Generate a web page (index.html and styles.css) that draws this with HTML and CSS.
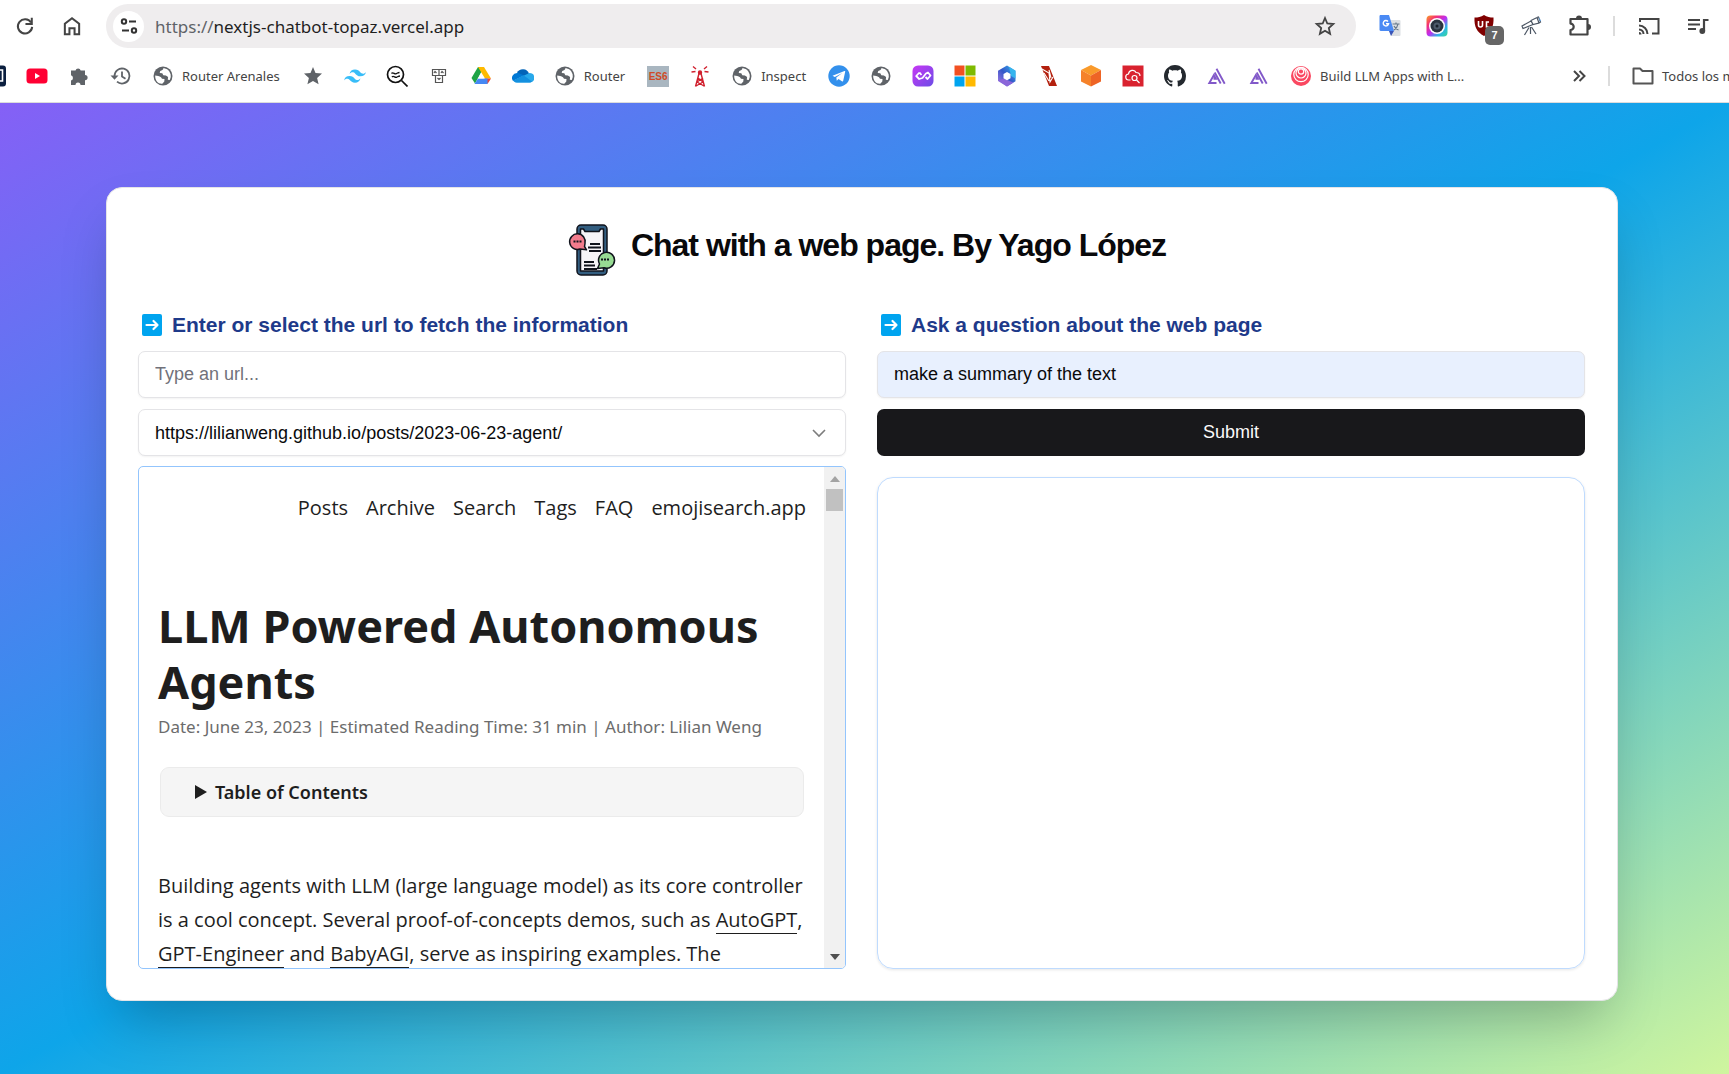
FILE: index.html
```html
<!DOCTYPE html>
<html lang="en">
<head>
<meta charset="utf-8">
<title>Chat with a web page</title>
<link rel="stylesheet" href="styles.css">
</head>
<body>
<svg class="defs" aria-hidden="true">
  <defs>
    <linearGradient id="purple" x1="0" y1="0" x2="1" y2="1"><stop offset="0" stop-color="#c837f5"/><stop offset="1" stop-color="#6b4de6"/></linearGradient>
    <linearGradient id="rainbow" x1="0" y1="0" x2="1" y2="1"><stop offset="0" stop-color="#f9a423"/><stop offset=".25" stop-color="#f5316f"/><stop offset=".5" stop-color="#c02df0"/><stop offset=".75" stop-color="#2bb7e8"/><stop offset="1" stop-color="#38d996"/></linearGradient>
    <linearGradient id="office" x1="0" y1="1" x2="1" y2="0"><stop offset="0" stop-color="#b07be8"/><stop offset=".5" stop-color="#3457c8"/><stop offset="1" stop-color="#35b8f0"/></linearGradient>
    <symbol id="globe" viewBox="-1 -1 22 22">
      <circle cx="10" cy="10" r="9.500" fill="#5f6368"/>
      <path fill="#fff" d="M2.200 9.500c2 .2 4.200.5 5.800 1.800l1 1.400 2.500.3-.2 2.400-2 2.300C5.400 18.200 1.900 14.600 2.200 9.500z"/>
      <path fill="#fff" d="M10.500 2.100c-.3 1.900-1.500 2.500-3.300 2.900L6.700 7l2.600.3 1 2 2.600.3 2.200 1.500-.3 2.700 2 .2A8 8 0 0 0 14.200 3.300z"/>
    </symbol>
    <symbol id="amplify" viewBox="0 0 22 22">
      <path fill="none" stroke="#8259c9" stroke-width="1.900" d="M10.500 18H3.300L7.800 10.200L9.800 13.800H7.500M8.700 7.500l6 11M10.500 3.800l8.200 15"/>
    </symbol>
  </defs>
</svg>

<header class="browser">
  <div class="toolbar">
    <button class="tool" aria-label="Reload"><svg viewBox="0 0 24 24" width="22" height="22"><path fill="none" stroke="#444" stroke-width="2.200" d="M18.600 8.200A7.800 7.800 0 1 0 19.800 13"/><path fill="#444" d="M20.500 3v8h-8v-2.200h5.800V3z"/></svg></button>
    <button class="tool" aria-label="Home"><svg viewBox="0 0 24 24" width="22" height="22"><path fill="none" stroke="#444" stroke-width="2.200" d="M4.200 21V9.600L12 3.500l7.800 6.100V21h-5v-6.500H9.200V21z"/></svg></button>
    <div class="omnibox">
      <button class="site-info" aria-label="Site information"><svg viewBox="0 0 20 20" width="20" height="20" fill="none" stroke="#333" stroke-width="2"><circle cx="5" cy="5.500" r="2.200"/><path d="M10 5.500h7M3 14.500h7"/><circle cx="15" cy="14.500" r="2.200"/></svg></button>
      <span class="address"><span class="scheme">https://</span>nextjs-chatbot-topaz.vercel.app</span>
      <button class="tool" aria-label="Bookmark this page"><svg viewBox="0 0 24 24" width="24" height="24"><path fill="none" stroke="#444" stroke-width="1.800" d="M12 4l2.300 5.500 6 .5-4.500 4 1.300 5.800L12 16.700l-5.100 3.100L8.200 14l-4.500-4 6-.5z"/></svg></button>
    </div>
    <div class="extensions">
      <button class="tool" aria-label="Translate"><svg viewBox="0 0 22 22" width="22" height="22"><path fill="#dcdfe3" d="M9 5h11.500q1 0 1 1v14q0 1-1 1H12z"/><path fill="#4a8af4" d="M1 0h9l5 16H2q-1.500 0-1.500-1.500V1z"/><path fill="#3a55b8" d="M10 16h5l-3 5z"/><path fill="none" stroke="#fff" stroke-width="1.400" d="M9 6.500A2.700 2.700 0 1 0 9.600 8.700H7"/><path fill="none" stroke="#66788a" stroke-width="1.200" d="M13.500 9h7M17 7.500V9M19 9c-.5 3-2.500 5-4 6M15 11c1 2 3 3.500 4.500 4"/></svg></button>
      <button class="tool" aria-label="Screen capture"><svg viewBox="0 0 22 22" width="22" height="22"><rect x=".5" y=".5" width="21" height="21" rx="4" fill="url(#rainbow)"/><circle cx="11" cy="11" r="8" fill="#fff"/><circle cx="11" cy="11" r="6.500" fill="#2a3440"/><circle cx="11" cy="11" r="3.500" fill="#4d5b6b"/><circle cx="11" cy="11" r="1.500" fill="#18202a"/></svg></button>
      <button class="tool blocker" aria-label="Content blocker"><svg viewBox="0 0 22 22" width="22" height="22"><path fill="#800000" d="M11 0c3 2 6 2.500 9.500 2.500C21 12 18 17 11 21 4 17 1 12 1.500 2.500 5 2.500 8 2 11 0z"/><path fill="none" stroke="#fff" stroke-width="1.600" d="M5.500 6v4q0 2 2 2t2-2V6M16 7h-2.500v5H16"/></svg><span class="badge">7</span></button>
      <button class="tool" aria-label="Telescope"><svg viewBox="0 0 22 22" width="22" height="22" fill="none" stroke="#4b5563" stroke-width="1.200"><path d="M2 11l9-5 2 3.500-10 4zM11 5.500l6-3 2 5.500-6 1.500zM17 2.500l1.500-.5 2 5-1.500 1M9 12.500L4.500 20M10.500 12v7M11.500 12l4.500 7"/><path fill="#60a5e8" stroke="none" d="M18.500 2l1.500 4.500 1-1z"/></svg></button>
      <button class="tool" aria-label="Extensions"><svg viewBox="0 0 24 24" width="24" height="24"><path fill="none" stroke="#444" stroke-width="2.200" stroke-linejoin="round" d="M3.500 5h17v15.500h-17v-4.500a3.200 3.200 0 0 0 0-6.400z"/><path fill="#444" d="M9 4.500a3 3 0 0 1 6 0zM21 10a3 3 0 0 1 0 6z"/></svg></button>
      <span class="divider"></span>
      <button class="tool" aria-label="Cast"><svg viewBox="0 0 24 24" width="24" height="24"><path fill="none" stroke="#444" stroke-width="2" d="M3 8V5h18.500v14.500H15M2 11.500a8.500 8.500 0 0 1 8.500 8.500M2 15.500A4.500 4.500 0 0 1 6.500 20"/><path fill="#444" d="M2 18v2.500h2.500A2.500 2.500 0 0 0 2 18z"/></svg></button>
      <button class="tool" aria-label="Media"><svg viewBox="0 0 24 24" width="24" height="24"><path stroke="#444" stroke-width="2.200" d="M2 6h12M2 10.500h12M2 15h8M18 17V6h4.500" fill="none"/><circle cx="16.300" cy="17" r="2.900" fill="#444"/></svg></button>
    </div>
  </div>
  <nav class="bookmarks" aria-label="Bookmarks">
    <a href="#" class="mark first" aria-label="Notes"><svg viewBox="0 0 22 22" width="22" height="22"><rect y=".5" width="22" height="21" rx="3" fill="#0b1f3f"/><path fill="none" stroke="#fff" stroke-width="1.600" d="M10 5h8.500v11H10"/></svg></a>
    <a href="#" class="mark" aria-label="YouTube"><svg viewBox="0 0 22 22" width="22" height="22"><rect x=".5" y="3.500" width="21" height="15" rx="3.500" fill="#ff0033"/><path fill="#fff" d="M9 8l5 3-5 3z"/></svg></a>
    <a href="#" class="mark" aria-label="Extensions"><svg viewBox="0 0 22 22" width="22" height="22"><path fill="#5f6368" d="M3 5.500h4.500a2.700 2.700 0 0 1 5.200 0h4.300v4.500a2.600 2.600 0 0 1 0 5.200v4.800h-4.500a2.500 2.500 0 0 0-5 0H3v-4.500a2.700 2.700 0 0 0 0-5.200z"/></svg></a>
    <a href="#" class="mark" aria-label="History"><svg viewBox="0 0 22 22" width="22" height="22"><path fill="none" stroke="#5f6368" stroke-width="1.800" d="M4.500 11a7.500 7.500 0 1 1 2.500 5.600M12 6.500v5l3.500 2.200"/><path fill="#5f6368" d="M.5 10.500h8l-4 4.200z"/></svg></a>
    <a href="#" class="mark labelled"><svg width="22" height="22"><use href="#globe"/></svg>Router Arenales</a>
    <a href="#" class="mark" aria-label="Favorites"><svg viewBox="0 0 22 22" width="22" height="22"><path fill="#5f6368" d="M11 2l2.500 6 6.500.6-4.900 4.300L16.600 19.200 11 15.900l-5.600 3.300 1.500-6.300L2 8.600l6.500-.6z"/></svg></a>
    <a href="#" class="mark" aria-label="Tailwind CSS"><svg viewBox="0 0 24 24" width="22" height="22"><path fill="#38bdf8" d="M12 5c-3.200 0-5.200 1.600-6 4.800 1.200-1.600 2.600-2.200 4.200-1.800.9.200 1.600.9 2.300 1.700C13.700 10.900 15 12.300 18 12.300c3.200 0 5.200-1.600 6-4.800-1.200 1.600-2.600 2.200-4.200 1.800-.9-.2-1.600-.9-2.300-1.700C16.300 6.400 15 5 12 5zM6 12c-3.200 0-5.200 1.600-6 4.800 1.200-1.600 2.600-2.200 4.200-1.800.9.200 1.600.9 2.300 1.700 1.200 1.200 2.500 2.600 5.500 2.600 3.200 0 5.200-1.600 6-4.800-1.200 1.600-2.600 2.200-4.200 1.800-.9-.2-1.600-.9-2.300-1.700C10.300 13.400 9 12 6 12z"/></svg></a>
    <a href="#" class="mark" aria-label="Search tool"><svg viewBox="0 0 22 22" width="22" height="22" fill="none" stroke="#111" stroke-width="1.700"><circle cx="9.500" cy="9.500" r="8"/><path d="M15.500 15.500l6 6"/><path stroke-width="1.400" d="M5.500 8.500c1.500-2 3 1 4.500.3s2-1.300 3.500-1.300M6 12c1.500-2 3 1 4.500.3s2-1.300 3.500-1.300"/></svg></a>
    <a href="#" class="mark" aria-label="Faces"><svg viewBox="0 0 22 22" width="22" height="22" fill="none" stroke="#555" stroke-width="1.200"><path d="M4.500 4.500h6.500v6H4.500zM11 4.500h6.500v6H11zM7.500 10.500h7v7h-7zM6 8l1-1.500L8.500 8M13 8l1-1.500L15.500 8M9.500 13l1.500 1.500 1.500-1.500"/></svg></a>
    <a href="#" class="mark" aria-label="Google Drive"><svg viewBox="0 0 22 22" width="22" height="22"><path fill="#1ea446" d="M8 2h6L5 18.500 1.500 13z"/><path fill="#ffba00" d="M8 2h6l7 11.500h-6z"/><path fill="#ea4335" d="M15 13.500h6L17.500 19z"/><path fill="#4688f4" d="M4.500 19L8 13.500h9.500L17.500 19z"/><path fill="#fff" d="M11 8l3 5.500H8z"/></svg></a>
    <a href="#" class="mark" aria-label="OneDrive"><svg viewBox="0 0 22 22" width="22" height="22"><path fill="#0364b8" d="M5 8a6.500 6.500 0 0 1 12 .5L12 13z"/><path fill="#0078d4" d="M5 8a5 5 0 0 0-4 8l11-5.500L6.500 8z"/><path fill="#28a8ea" d="M3 17.500l9-7L17.500 8a4.800 4.800 0 0 1 1 9.500H5z"/><path fill="#1490df" d="M1 15.500l10.500-5.300 8.500 6.300q-1 1-2.500 1H5Q2 17.500 1 15.500z"/></svg></a>
    <a href="#" class="mark labelled"><svg width="22" height="22"><use href="#globe"/></svg>Router</a>
    <a href="#" class="mark" aria-label="ES6"><span class="es6">ES6</span></a>
    <a href="#" class="mark" aria-label="Antenna"><svg viewBox="0 0 22 22" width="22" height="22" fill="none" stroke="#d0202e" stroke-width="1.400"><path d="M6.500 21.500l3.500-13h2l3.500 13M8 17l6-4M14 17l-5-4M7 21l7-4M15 21l-7-4M4 1.500l3 2.500M2.500 7l4-.5M18 1.500l-3 2.500M19.500 7l-4-.5"/><circle cx="11" cy="7.500" r="1.500" fill="#d0202e"/></svg></a>
    <a href="#" class="mark labelled"><svg width="22" height="22"><use href="#globe"/></svg>Inspect</a>
    <a href="#" class="mark" aria-label="Telegram"><svg viewBox="0 0 22 22" width="22" height="22"><circle cx="11" cy="11" r="10.700" fill="#3390ec"/><path fill="#fff" d="M4.500 10.800L16.500 6q1-.3.700.8l-2 9q-.3 1.200-1.300.5L10.500 14l-1.700 1.800-.5-3.300 6-4.500-7.500 4z"/></svg></a>
    <a href="#" class="mark" aria-label="Site"><svg width="22" height="22"><use href="#globe"/></svg></a>
    <a href="#" class="mark" aria-label="Loop"><svg viewBox="0 0 22 22" width="22" height="22"><rect x=".5" y=".5" width="21" height="21" rx="5.500" fill="url(#purple)"/><path fill="none" stroke="#fff" stroke-width="1.800" stroke-linejoin="round" d="M7.500 7.500L4.200 11l3 3 3.300-1 3.500-4.500 2-1L18.500 10.500l-3 3.500-2-2M9.500 10L7.500 7.500"/></svg></a>
    <a href="#" class="mark" aria-label="Microsoft"><svg viewBox="0 0 22 22" width="22" height="22"><path fill="#f25022" d="M.5.500h10v10H.5z"/><path fill="#7fba00" d="M11.500.5h10v10h-10z"/><path fill="#00a4ef" d="M.5 11.500h10v10H.5z"/><path fill="#ffb900" d="M11.500 11.500h10v10h-10z"/></svg></a>
    <a href="#" class="mark" aria-label="Microsoft 365"><svg viewBox="0 0 22 22" width="22" height="22"><path fill="url(#office)" d="M11 .5l8.500 5.200v10.600L11 21.500 2 16V5.700z"/><path fill="#36b5ee" d="M13 1.800l6.500 4v7.700L15 11z"/><path fill="#8b66d9" d="M2.500 15.500L8 13.500l4 2 5.500 2-6.500 4z"/><path fill="#fff" d="M11 7l3.500 2v4.200L11 15.200l-3.500-2V9z"/></svg></a>
    <a href="#" class="mark" aria-label="Red mark"><svg viewBox="0 0 22 22" width="22" height="22"><path fill="#b3200e" d="M3 1h8l8 20h-8z"/><path fill="none" stroke="#fff" stroke-width="1.100" d="M4 4l7 4 1 9 3-5M6 8l5 8M11 5l2 8"/></svg></a>
    <a href="#" class="mark" aria-label="Orange cube"><svg viewBox="0 0 22 22" width="22" height="22"><path fill="#f99a2b" d="M11 0l10 5-10 5.500L1 5z"/><path fill="#f5822a" d="M1 5l10 5.500v11L1 16.500z"/><path fill="#ee6425" d="M21 5l-10 5.500v11l10-5z"/></svg></a>
    <a href="#" class="mark" aria-label="Cloud search"><svg viewBox="0 0 22 22" width="22" height="22"><path fill="#d9222f" d="M.5.500h21v21H.5z"/><path fill="none" stroke="#fff" stroke-width="1.200" d="M8.500 15H7a3 3 0 0 1-.5-6C7 5 12.500 4 14 7.500c2.500 0 4 1.500 4 3.500"/><circle cx="12.500" cy="13" r="2.500" fill="none" stroke="#fff" stroke-width="1.200"/><path stroke="#fff" stroke-width="1.200" d="M14.500 15l3 3"/></svg></a>
    <a href="#" class="mark" aria-label="GitHub"><svg viewBox="0 0 16 16" width="22" height="22"><path fill="#24292f" d="M8 0C3.580 0 0 3.580 0 8c0 3.540 2.290 6.530 5.470 7.590.4.070.55-.17.55-.38 0-.19-.01-.82-.01-1.490-2.010.37-2.530-.49-2.690-.94-.09-.23-.48-.94-.82-1.130-.28-.15-.68-.52-.01-.53.63-.01 1.080.58 1.230.82.720 1.210 1.870.87 2.330.66.070-.52.280-.87.510-1.070-1.780-.2-3.640-.89-3.640-3.950 0-.87.310-1.590.82-2.150-.08-.2-.36-1.020.08-2.120 0 0 .67-.21 2.200.82.640-.18 1.320-.27 2-.27s1.360.09 2 .27c1.530-1.040 2.200-.82 2.200-.82.440 1.100.16 1.920.08 2.120.51.560.82 1.270.82 2.150 0 3.070-1.870 3.750-3.650 3.950.29.250.54.730.54 1.480 0 1.070-.01 1.930-.01 2.200 0 .21.150.46.550.38A8.010 8.010 0 0 0 16 8c0-4.420-3.580-8-8-8z"/></svg></a>
    <a href="#" class="mark" aria-label="Amplify"><svg width="22" height="22"><use href="#amplify"/></svg></a>
    <a href="#" class="mark" aria-label="Amplify docs"><svg width="22" height="22"><use href="#amplify"/></svg></a>
    <a href="#" class="mark labelled"><svg viewBox="-1 -1 22 22" width="22" height="22"><circle cx="10" cy="10" r="10" fill="#fa4861"/><g fill="none" stroke="#fff" stroke-width="1.200"><circle cx="10" cy="8.500" r="7.200"/><circle cx="10" cy="7" r="5"/><circle cx="10" cy="5.500" r="2.700"/></g></svg>Build LLM Apps with L...</a>
    <span class="bookmarks-end">
      <button class="tool" aria-label="More bookmarks"><svg viewBox="0 0 14 14" width="14" height="14"><path fill="none" stroke="#444" stroke-width="2" d="M2 2l5 5-5 5M7.500 2l5 5-5 5"/></svg></button>
      <span class="divider"></span>
      <a href="#" class="mark folder"><svg viewBox="0 0 22 18" width="22" height="18"><path fill="none" stroke="#555" stroke-width="2" stroke-linejoin="round" d="M1.500 1.500h6.500l2.500 2.500h10v12.500h-19z"/></svg>Todos los marcadores</a>
    </span>
  </nav>
</header>

<main class="page">
  <section class="card">
    <h1 class="title">
      <svg viewBox="-12 0 64 52" width="64" height="52" stroke="#10131c" stroke-width="1.500" stroke-linejoin="round"><rect x="8" y="1" width="30" height="50" rx="4" fill="#335e80"/><path fill="#f6f4f8" d="M11.500 5h3l1.500 2.500h14l1.500-2.500h3v42h-23z"/><path fill="none" stroke-width="1.800" d="M21 20h10M19 23.500h13M20 27h12M15 38h10M15 41.500h11M15 45h13"/><path fill="#f27c8d" d="M16 19.500A7.800 7.800 0 1 0 11 25l6.500.8-2-3.300z"/><path fill="#97db93" d="M30.500 40A8 8 0 1 1 35 43.800l-6.500.7z"/><path fill="none" stroke-width="2" stroke-dasharray="2 1" d="M4.500 17.500h8M32 35.500h8"/></svg>
      <span>Chat with a web page. By Yago López</span>
    </h1>
    <div class="columns">
      <div class="column">
        <h2 class="step"><svg viewBox="0 0 20 22" width="20" height="22"><rect width="20" height="22" rx="2" fill="#00a4ef"/><path fill="none" stroke="#fff" stroke-width="2.200" stroke-linecap="round" stroke-linejoin="round" d="M4.500 11h10.500M11.500 7l4 4-4 4"/></svg><label for="url">Enter or select the url to fetch the information</label></h2>
        <input class="field" id="url" type="text" placeholder="Type an url...">
        <div class="picker">
          <select class="field" aria-label="Saved url"><option>https://lilianweng.github.io/posts/2023-06-23-agent/</option></select>
          <svg class="chevron" viewBox="0 0 16 16" width="16" height="16"><path fill="none" stroke="#7d7d7d" stroke-width="1.600" d="M2 5l6 6 6-6"/></svg>
        </div>
        <div class="preview">
          <article class="article">
            <nav class="menu"><a href="#">Posts</a><a href="#">Archive</a><a href="#">Search</a><a href="#">Tags</a><a href="#">FAQ</a><a href="#">emojisearch.app</a></nav>
            <h2 class="headline">LLM Powered Autonomous Agents</h2>
            <p class="meta">Date: June 23, 2023 | Estimated Reading Time: 31 min | Author: Lilian Weng</p>
            <details class="toc"><summary><svg viewBox="0 0 12 14" width="12" height="14"><path fill="#1e1e1e" d="M0 0l12 7-12 7z"/></svg>Table of Contents</summary></details>
            <p class="body">Building agents with LLM (large language model) as its core controller is a cool concept. Several proof-of-concepts demos, such as <a href="#">AutoGPT</a>, <a href="#">GPT-Engineer</a> and <a href="#">BabyAGI</a>, serve as inspiring examples. The</p>
          </article>
          <div class="scrollbar" aria-hidden="true">
            <svg viewBox="0 0 10 6" width="10" height="6"><path fill="#a3a3a3" d="M5 0l5 6H0z"/></svg>
            <span class="thumb"></span>
            <svg class="down" viewBox="0 0 10 6" width="10" height="6"><path fill="#505050" d="M0 0h10L5 6z"/></svg>
          </div>
        </div>
      </div>
      <div class="column">
        <h2 class="step"><svg viewBox="0 0 20 22" width="20" height="22"><rect width="20" height="22" rx="2" fill="#00a4ef"/><path fill="none" stroke="#fff" stroke-width="2.200" stroke-linecap="round" stroke-linejoin="round" d="M4.500 11h10.500M11.500 7l4 4-4 4"/></svg><label for="question">Ask a question about the web page</label></h2>
        <input class="field filled" id="question" type="text" value="make a summary of the text">
        <button class="submit" type="submit">Submit</button>
        <div class="answer"></div>
      </div>
    </div>
  </section>
</main>
</body>
</html>
```

FILE: styles.css
```css
* { box-sizing: border-box; }

body {
  margin: 0;
  min-height: 100vh;
  display: flex;
  flex-direction: column;
  overflow: hidden;
  font-family: "Liberation Sans", Arial, sans-serif;
  color: #09090b;
}

h1, h2, p { margin: 0; }
svg { flex: none; display: block; }
.defs { position: absolute; width: 0; height: 0; }

/* Browser bars */
.browser {
  background: #fff;
  border-bottom: 1px solid #dcdcdc;
  font-family: "Noto Sans", sans-serif;
  color: #444;
}

.tool {
  display: flex;
  padding: 0;
  border: 0;
  background: none;
  flex: none;
}

.toolbar {
  display: flex;
  align-items: center;
  gap: 25px;
  padding: 4px 19px 4px 14px;
}

.omnibox {
  flex: 1;
  display: flex;
  align-items: center;
  height: 44px;
  margin: 0 -2px;
  padding: 0 19px 0 7px;
  border-radius: 22px;
  background: #efedee;
}

.site-info {
  display: grid;
  place-items: center;
  width: 31px;
  height: 31px;
  padding: 0;
  border: 0;
  border-radius: 50%;
  background: #fff;
}

.address { flex: 1; margin-left: 11px; font-size: 17px; color: #1f1f1f; }
.scheme { color: #5f6368; }

.extensions { display: flex; align-items: center; gap: 25px; }
.divider { width: 2px; height: 20px; background: #dcdcdc; flex: none; }
.extensions .divider { margin: 0 -3px; }
.blocker { position: relative; }

.badge {
  position: absolute;
  left: 12px;
  top: 11px;
  width: 19px;
  height: 19px;
  border-radius: 5px;
  background: #666;
  color: #fff;
  font-size: 11px;
  font-weight: 700;
  line-height: 19px;
}

.bookmarks {
  display: flex;
  align-items: center;
  gap: 20px;
  height: 50px;
  padding-bottom: 2px;
  font-size: 13px;
  white-space: nowrap;
}

.mark {
  display: flex;
  align-items: center;
  gap: 8px;
  color: inherit;
  text-decoration: none;
  flex: none;
}

.first { margin-left: -16px; }
.labelled { padding-right: 2px; }

.es6 {
  width: 22px;
  background: #a9b6c0;
  color: #cf4a26;
  font: 700 10px/21px "Liberation Sans", sans-serif;
  text-align: center;
}

.bookmarks-end {
  flex: 1;
  min-width: 0;
  display: flex;
  align-items: center;
  gap: 22px;
  justify-content: flex-end;
}

.folder { width: 97px; overflow: hidden; }

/* Page */
.page {
  flex: 1;
  padding: 84px 111px 73px 106px;
  background: linear-gradient(to bottom right, #8560f6, #0ea5e9, #cff59e);
}

.card {
  min-height: 100%;
  padding: 31px 32px 31px 31px;
  border: 1px solid #e4e4e7;
  border-radius: 16px;
  background: #fff;
  box-shadow: 0 28px 55px -13px rgba(0, 0, 0, .25);
}

.title {
  display: flex;
  align-items: flex-start;
  justify-content: center;
  gap: 10px;
  height: 66px;
  padding-top: 5px;
  font-size: 32px;
  line-height: 43px;
  letter-spacing: -1px;
}

.columns {
  display: grid;
  grid-template-columns: 1fr 1fr;
  gap: 31px;
  margin-top: 24px;
}

.column { display: flex; flex-direction: column; }

.step {
  display: flex;
  align-items: center;
  gap: 10px;
  height: 32px;
  margin-bottom: 10px;
  padding-left: 4px;
  font-size: 21px;
  color: #1e3a8a;
}

.field {
  width: 100%;
  height: 47px;
  padding: 0 16px;
  border: 1px solid #e4e4e7;
  border-radius: 7px;
  background: #fff;
  box-shadow: 0 1px 2px rgba(0, 0, 0, .05);
  color: #09090b;
  font: 18px "Liberation Sans", sans-serif;
  appearance: none;
}

.field::placeholder { color: #71717a; }
.filled { background: #e8f0fe; }

.picker { position: relative; margin-top: 11px; }
.chevron { position: absolute; right: 19px; top: 16px; }

.submit {
  height: 47px;
  margin-top: 11px;
  border: 0;
  border-radius: 7px;
  background: #18181b;
  color: #fafafa;
  font: 18px "Liberation Sans", sans-serif;
}

.answer {
  flex: 1;
  margin-top: 21px;
  border: 1px solid #bfdbfe;
  border-radius: 16px;
  box-shadow: 0 1px 3px rgba(0, 0, 0, .1);
}

/* Embedded article */
.preview {
  display: flex;
  height: 503px;
  margin-top: 10px;
  border: 1px solid #93c5fd;
  border-radius: 5px;
  overflow: hidden;
}

.article {
  flex: 1;
  min-width: 0;
  padding: 0 18px 0 19px;
  overflow: hidden;
  font-family: "Open Sans", sans-serif;
  color: #1e1e1e;
}

.menu {
  display: flex;
  justify-content: flex-end;
  gap: 18px;
  padding-top: 24px;
  font-size: 20px;
  line-height: 34px;
}

.menu a { color: inherit; text-decoration: none; }

.headline {
  margin-top: 73px;
  font-family: "Noto Sans", sans-serif;
  font-size: 45px;
  line-height: 56px;
}

.meta {
  font-family: "Noto Sans", sans-serif;
  font-size: 17px;
  line-height: 34px;
  color: #6c6c6c;
}

.toc {
  margin: 23px 2px 0;
  padding: 0 34px;
  border: 1px solid #ebebeb;
  border-radius: 9px;
  background: #f5f5f5;
  font-family: "Noto Sans", sans-serif;
  font-size: 18px;
  font-weight: 600;
  line-height: 48px;
}

.toc summary { display: flex; align-items: center; gap: 8px; list-style: none; }

.body { margin-top: 52px; font-size: 20px; line-height: 34px; }
.body a { color: inherit; text-decoration: none; border-bottom: 1px solid #1e1e1e; }

.scrollbar {
  width: 21px;
  display: flex;
  flex-direction: column;
  align-items: center;
  padding: 9px 0 8px;
  background: #f1f1f1;
}

.thumb { width: 17px; height: 22px; margin-top: 7px; background: #c1c1c1; }
.down { margin-top: auto; }
```
